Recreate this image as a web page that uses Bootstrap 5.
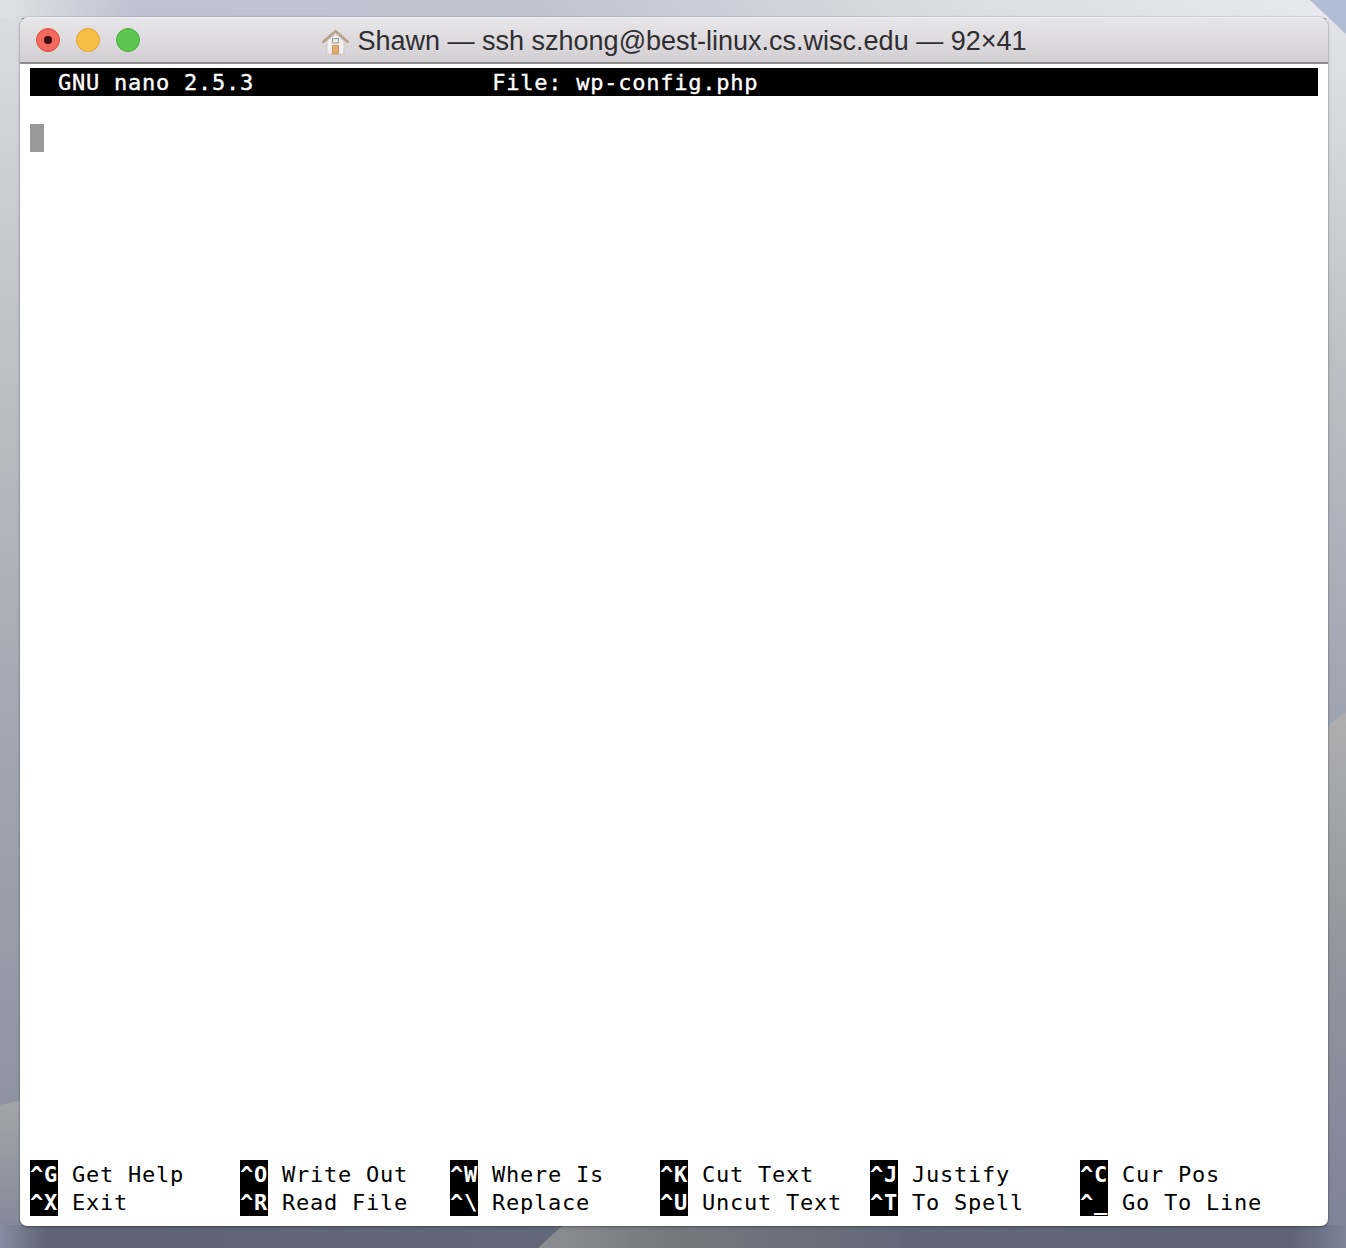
<!doctype html>
<html lang="en">
<head>
<meta charset="utf-8">
<title>Terminal</title>
<link href="https://cdn.jsdelivr.net/npm/bootstrap@5.3.0/dist/css/bootstrap.min.css" rel="stylesheet">
<style>
html,body{height:100%;margin:0}
body{width:1346px;height:1248px;overflow:hidden;background:#8f95a5}
.desk{width:1346px;height:1248px;padding:17px 18px 22px 20px;position:relative}
.wallshape{position:absolute;inset:0}
.termwin{position:relative;height:100%;background:#fff;border-radius:9px 9px 7px 7px;box-shadow:0 0 1px rgba(0,0,0,.6),0 1px 3px rgba(0,0,0,.3);overflow:hidden}
.winbar{height:47px;background:linear-gradient(180deg,#e7e6e8 0,#d2d0d2 100%);border-bottom:2px solid #8c8c8c;border-top:1px solid #f1f0f1;padding-left:16px;position:relative}
.dot{width:24px;height:24px;border-radius:50%;border:1px solid}
.dot-r{background:#f1695f;border-color:#e0503f}
.dot-r i{display:block;width:8px;height:8px;border-radius:50%;background:#3d0604}
.dot-y{background:#f9bf45;border-color:#e0a03a}
.dot-g{background:#5dc54f;border-color:#4cab3c}
.wintitle{position:absolute;inset:0;padding-top:3px;font:27px/1 "Liberation Sans",sans-serif;color:#2f2e30}
.termbody{height:calc(100% - 47px);padding:4px 10px 10px;font:22px/30px "DejaVu Sans Mono",monospace;letter-spacing:.76px;color:#000}
.nanohead{height:28px;background:#000;color:#fff;white-space:pre;-webkit-text-stroke:.35px #fff}
.cursorblock{width:14px;height:28px;background:#999;margin-top:28px}
.keygrid{display:grid;grid-template-columns:repeat(6,210px);grid-auto-rows:28px;white-space:pre}
.kcap{display:inline-block;width:28px;height:28px;vertical-align:top;background:#000;color:#fff;font-weight:700;margin-right:14px}
</style>
</head>
<body>
<div class="desk">
  <svg class="wallshape" width="1346" height="1248" viewBox="0 0 1346 1248" aria-hidden="true">
    <defs>
      <linearGradient id="lside" x1="0" y1="0" x2="0" y2="1"><stop offset="0" stop-color="#dcdee3"/><stop offset=".2" stop-color="#c6c8ce"/><stop offset=".55" stop-color="#a6a9b3"/><stop offset="1" stop-color="#868c9d"/></linearGradient>
      <linearGradient id="rside" x1="0" y1="0" x2="0" y2="1"><stop offset="0" stop-color="#e4e5e9"/><stop offset=".3" stop-color="#bcbec5"/><stop offset=".7" stop-color="#9198a8"/><stop offset="1" stop-color="#858b9e"/></linearGradient>
      <linearGradient id="topstrip" x1="0" y1="0" x2="1" y2="0"><stop offset="0" stop-color="#dfe1e6"/><stop offset=".1" stop-color="#bfc3d1"/><stop offset=".4" stop-color="#c0c4d1"/><stop offset=".7" stop-color="#dadce2"/><stop offset="1" stop-color="#e8e9ec"/></linearGradient>
      <linearGradient id="botstrip" x1="0" y1="0" x2="1" y2="0"><stop offset="0" stop-color="#858ca3"/><stop offset=".035" stop-color="#5f6474"/><stop offset=".5" stop-color="#646979"/><stop offset=".96" stop-color="#5f6475"/><stop offset="1" stop-color="#7c8398"/></linearGradient>
      <linearGradient id="rrock" x1="0" y1="0" x2="0" y2="1"><stop offset="0" stop-color="#afafaf"/><stop offset=".45" stop-color="#93959f"/><stop offset="1" stop-color="#7c8397"/></linearGradient>
      <linearGradient id="lrock" x1="0" y1="0" x2="0" y2="1"><stop offset="0" stop-color="#a3a5a9"/><stop offset="1" stop-color="#7f8597"/></linearGradient>
      <linearGradient id="brock" x1="0" y1="0" x2="1" y2="0"><stop offset="0" stop-color="#8d8e91"/><stop offset=".35" stop-color="#77797f"/><stop offset="1" stop-color="#646979"/></linearGradient>
    </defs>
    <rect x="0" y="0" width="22" height="1248" fill="url(#lside)"/>
    <rect x="1326" y="0" width="20" height="1248" fill="url(#rside)"/>
    <rect x="0" y="0" width="1346" height="18" fill="url(#topstrip)"/>
    <polygon points="1310,0 1346,0 1346,34" fill="#b0bcd4"/>
    <polygon points="0,1105 22,1100 22,1248 0,1248" fill="url(#lrock)"/>
    <polygon points="1326,727 1346,712 1346,1248 1326,1248" fill="url(#rrock)"/>
    <rect x="0" y="1225" width="1346" height="23" fill="url(#botstrip)"/>
    <polygon points="538,1248 562,1226 640,1226 900,1226 900,1248" fill="url(#brock)"/>
  </svg>
  <div class="termwin">
    <div class="winbar d-flex align-items-center gap-3">
      <span class="dot dot-r d-flex align-items-center justify-content-center"><i></i></span>
      <span class="dot dot-y"></span>
      <span class="dot dot-g"></span>
      <div class="wintitle d-flex align-items-center justify-content-center gap-2">
        <svg width="28" height="28" viewBox="0 0 28 28" aria-hidden="true">
          <path d="M5 13V26H22V13L13.5 6Z" fill="#f1f0ee" stroke="#c9c9c9"/>
          <path d="M0.5 14.5 13.5 3 26.5 14.5" fill="none" stroke="#b5a089" stroke-width="2.4"/>
          <rect x="10.5" y="10.5" width="6" height="4.5" fill="#e8e8e8" stroke="#a09a94"/>
          <rect x="10.5" y="17.5" width="6" height="8.5" fill="#e3ab6e" stroke="#c99a66"/>
        </svg>
        <span>Shawn — ssh szhong@best-linux.cs.wisc.edu — 92×41</span>
      </div>
    </div>
    <div class="termbody d-flex flex-column">
      <div class="nanohead">  GNU nano 2.5.3                 File: wp-config.php</div>
      <div class="cursorblock"></div>
      <div class="keygrid mt-auto">
        <div><span class="kcap">^G</span>Get Help</div>
        <div><span class="kcap">^O</span>Write Out</div>
        <div><span class="kcap">^W</span>Where Is</div>
        <div><span class="kcap">^K</span>Cut Text</div>
        <div><span class="kcap">^J</span>Justify</div>
        <div><span class="kcap">^C</span>Cur Pos</div>
        <div><span class="kcap">^X</span>Exit</div>
        <div><span class="kcap">^R</span>Read File</div>
        <div><span class="kcap">^\</span>Replace</div>
        <div><span class="kcap">^U</span>Uncut Text</div>
        <div><span class="kcap">^T</span>To Spell</div>
        <div><span class="kcap">^_</span>Go To Line</div>
      </div>
    </div>
  </div>
</div>
<script src="https://cdn.jsdelivr.net/npm/bootstrap@5.3.0/dist/js/bootstrap.bundle.min.js"></script>
</body>
</html>
